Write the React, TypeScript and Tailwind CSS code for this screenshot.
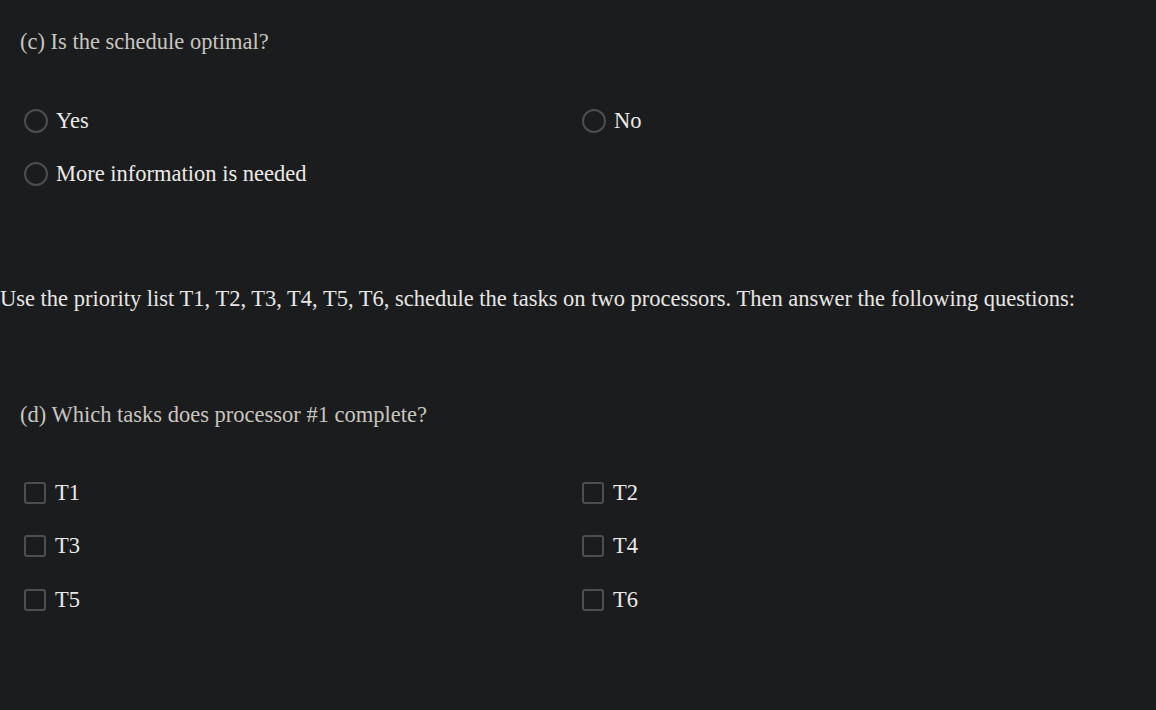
import React from 'react';

const serif = { fontFamily: '"Liberation Serif", "Times New Roman", serif' };

function Radio({ label }: { label: string }) {
  return (
    <label className="flex items-center gap-[8px] h-[53px]">
      <span className="w-[24px] h-[24px] rounded-full border-2 border-[#4a4f53] shrink-0" />
      <span className="text-[22.5px] leading-[26px] text-[#ebe9e6]">{label}</span>
    </label>
  );
}

function Check({ label }: { label: string }) {
  return (
    <label className="flex items-center gap-[9px] h-[53.5px]">
      <span className="w-[22px] h-[22px] rounded-[3px] border-2 border-[#4a4f53] shrink-0" />
      <span className="text-[22.5px] leading-[26px] text-[#ebe9e6]">{label}</span>
    </label>
  );
}

export default function App() {
  return (
    <div className="w-[1156px] h-[710px] bg-[#1b1c1e] overflow-hidden" style={serif}>
      {/* Part (c) */}
      <div className="pl-[20px] pt-[29px] text-[22.5px] leading-[26px] text-[#c9c5be]">
        (c) Is the schedule optimal?
      </div>
      <div className="grid grid-cols-[558px_1fr] pl-[24px] mt-[39px]">
        <Radio label="Yes" />
        <Radio label="No" />
        <Radio label="More information is needed" />
      </div>

      <p className="mt-[86px] text-[22.5px] text-[#e8e6e3] leading-[26px]">
        Use the priority list T1, T2, T3, T4, T5, T6, schedule the tasks on two processors. Then answer the following questions:
      </p>

      {/* Part (d) */}
      <div className="pl-[20px] mt-[90px] text-[22.5px] leading-[26px] text-[#c9c5be]">
        (d) Which tasks does processor #1 complete?
      </div>
      <div className="grid grid-cols-[558px_1fr] pl-[24px] mt-[38px]">
        <Check label="T1" />
        <Check label="T2" />
        <Check label="T3" />
        <Check label="T4" />
        <Check label="T5" />
        <Check label="T6" />
      </div>
    </div>
  );
}
